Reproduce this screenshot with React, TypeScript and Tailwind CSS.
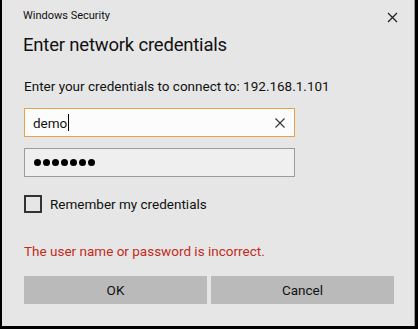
export default function App() {
  return (
    <div
      className="h-[329px] w-[418px] overflow-hidden bg-black"
      style={{ fontFamily: 'Roboto, "Noto Sans", sans-serif' }}
    >
      <div className="ml-[2px] mr-[3px] h-[326px] border-r border-[#9a9a9a] bg-[#e6e6e6] pl-[22px] pr-[14px] text-[#111]">
        <div className="flex items-center justify-between pt-[7px]">
          <span className="-ml-[1px] text-[11px] leading-[18px]">Windows Security</span>
          <svg width="11" height="11" viewBox="0 0 11 11" className="mr-[2px] mt-[2px]" fill="none" stroke="#222" strokeWidth="1.3">
            <path d="M1 1 L10 10 M10 1 L1 10" />
          </svg>
        </div>
        <div className="-ml-[1px] mt-[8px] text-[18.5px] leading-[24px] tracking-[-0.2px]">Enter network credentials</div>
        <div className="mt-[19px] text-[13.5px] leading-[20px]">
          Enter your credentials to connect to: 192.168.1.101
        </div>
        <div className="mt-[12px] flex h-[29px] w-[271px] items-center justify-between border border-[#e8a04a] bg-[#fcfcfc] pl-[8px] pr-[9px]">
          <span className="flex items-center text-[13.5px] leading-[20px]">
            demo<span className="ml-[1px] inline-block h-[17px] w-px bg-black" />
          </span>
          <svg width="10" height="10" viewBox="0 0 10 10" fill="none" stroke="#333" strokeWidth="1.1">
            <path d="M0.5 0.5 L9.5 9.5 M9.5 0.5 L0.5 9.5" />
          </svg>
        </div>
        <div className="mt-[11px] flex h-[29px] w-[271px] items-center gap-[2px] border border-[#9c9c9c] bg-[#efefef] pl-[9px]">
          {Array.from({ length: 7 }).map((_, i) => (
            <span key={i} className="inline-block h-[7px] w-[7px] rounded-full bg-black" />
          ))}
        </div>
        <div className="mt-[17px] flex items-center gap-[8px]">
          <span className="inline-block h-[18px] w-[18px] border-2 border-[#333]" />
          <span className="text-[13.5px] leading-[20px]">Remember my credentials</span>
        </div>
        <div className="mt-[27px] text-[13.5px] leading-[20px] text-[#c42b1c]">
          The user name or password is incorrect.
        </div>
        <div className="mt-[15px] flex gap-[4px]">
          <button className="h-[28px] w-[183px] bg-[#bababa] text-[13.5px] text-[#111]">OK</button>
          <button className="h-[28px] w-[183px] bg-[#bababa] text-[13.5px] text-[#111]">Cancel</button>
        </div>
      </div>
    </div>
  );
}
